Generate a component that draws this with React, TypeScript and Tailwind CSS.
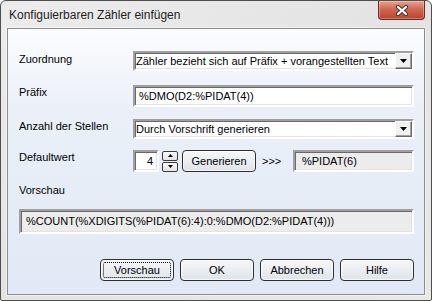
import React from "react";

const sunken =
  "border-2 border-t-[#a0a0a0] border-l-[#a0a0a0] border-b-white border-r-white shadow-[inset_1px_1px_0_#696969,inset_-1px_-1px_0_#e3e3e3]";

function Combo({ text }: { text: string }) {
  return (
    <div className={`flex h-[20px] flex-1 items-center bg-white ${sunken}`}>
      <span className="flex-1 truncate pl-[1px]">{text}</span>
      <div className="flex h-full w-[17px] items-center justify-center border border-t-white border-l-white border-b-[#696969] border-r-[#696969] bg-[#f0f0f0] shadow-[inset_-1px_-1px_0_#a0a0a0]">
        <svg width="7" height="4" viewBox="0 0 7 4">
          <path d="M0 0h7L3.5 4z" fill="#000" />
        </svg>
      </div>
    </div>
  );
}

function Btn({ label, focus }: { label: string; focus?: boolean }) {
  return (
    <div className="relative flex h-[22px] w-[74px] items-center justify-center rounded-[4px] border border-[#2e2e2e] bg-linear-to-b from-[#f6f7f9] to-[#dfe4ea] shadow-[inset_0_0_0_1px_rgba(255,255,255,0.7)]">
      {focus && (
        <div className="absolute inset-[2px] rounded-[2px] border border-dotted border-black" />
      )}
      <span>{label}</span>
    </div>
  );
}

function Spin({ up }: { up?: boolean }) {
  return (
    <div className="flex h-[10px] w-[16px] items-center justify-center rounded-[2px] border border-[#3c3c3c] bg-linear-to-b from-[#fbfbfb] to-[#e4e4e4]">
      <svg width="5" height="3" viewBox="0 0 5 3">
        {up ? <path d="M0 3h5L2.5 0z" fill="#000" /> : <path d="M0 0h5L2.5 3z" fill="#000" />}
      </svg>
    </div>
  );
}

export default function App() {
  return (
    <div className="relative flex h-[301px] w-[432px] flex-col rounded-t-[6px] rounded-b-[2px] border border-[#4e4e4e] bg-linear-to-br from-[#ececec] via-[#e3e3e3] to-[#e8e8e8] font-['Liberation_Sans',Arial,sans-serif] text-[11px] leading-[13px] text-black">
      <div className="h-[27px] shrink-0 pl-[8px] pt-[7px] text-[12px] leading-[14px] text-[#1e1e1e]">
        Konfiguierbaren Zähler einfügen
      </div>
      <div className="absolute right-[6px] top-0 flex h-[19px] w-[47px] items-center justify-center rounded-b-[4px] border border-t-0 border-[#6e2a1c] bg-linear-to-b from-[#e6a293] via-[#cf6852] via-45% to-[#bf3f28] shadow-[inset_0_0_0_1px_rgba(255,255,255,0.3)]">
        <svg width="14" height="11" viewBox="0 0 14 11">
          <path d="M3 2L11 9M11 2L3 9" stroke="#3a3a3a" strokeWidth="4.2" strokeLinecap="round" />
          <path d="M3 2L11 9M11 2L3 9" stroke="#ffffff" strokeWidth="2.2" strokeLinecap="round" />
        </svg>
      </div>

      <div className="mx-[6px] mb-[5px] flex flex-1 flex-col border border-[#8c8c8c] bg-linear-to-b from-[#fbfcfe] via-[#ebf0f8] via-30% to-[#e0e9f5] pl-[11px] pr-[10px] pt-[22px] shadow-[0_0_0_1px_rgba(255,255,255,0.5)]">
        <div className="flex h-[20px]">
          <div className="w-[114px] pt-[2px]">Zuordnung</div>
          <Combo text="Zähler bezieht sich auf Präfix + vorangestellten Text" />
        </div>

        <div className="mt-[14px] flex h-[22px]">
          <div className="w-[114px] pt-[1px]">Präfix</div>
          <div className={`flex flex-1 items-center bg-white pl-[4px] ${sunken}`}>%DMO(D2:%PIDAT(4))</div>
        </div>

        <div className="mt-[12px] flex h-[20px]">
          <div className="w-[114px] pt-[1px]">Anzahl der Stellen</div>
          <Combo text="Durch Vorschrift generieren" />
        </div>

        <div className="mt-[11px] flex h-[22px] items-center">
          <div className="h-full w-[114px] pt-[1px]">Defaultwert</div>
          <div className={`flex h-[22px] w-[26px] items-center justify-end bg-white pr-[4px] ${sunken}`}>4</div>
          <div className="ml-[3px] flex flex-col gap-[1px]">
            <Spin up />
            <Spin />
          </div>
          <div className="ml-[4px]">
            <Btn label="Generieren" />
          </div>
          <span className="ml-[6px] w-[31px]">&gt;&gt;&gt;</span>
          <div className={`flex h-[22px] flex-1 items-center bg-[#ececec] pl-[7px] ${sunken}`}>%PIDAT(6)</div>
        </div>

        <div className="mt-[12px]">Vorschau</div>

        <div className={`mt-[12px] flex h-[25px] items-center bg-[#ececec] pl-[5px] ${sunken}`}>
          %COUNT(%XDIGITS(%PIDAT(6):4):0:%DMO(D2:%PIDAT(4)))
        </div>

        <div className="mt-[25px] flex justify-end gap-[6px]">
          <Btn label="Vorschau" focus />
          <Btn label="OK" />
          <Btn label="Abbrechen" />
          <Btn label="Hilfe" />
        </div>
      </div>
    </div>
  );
}
